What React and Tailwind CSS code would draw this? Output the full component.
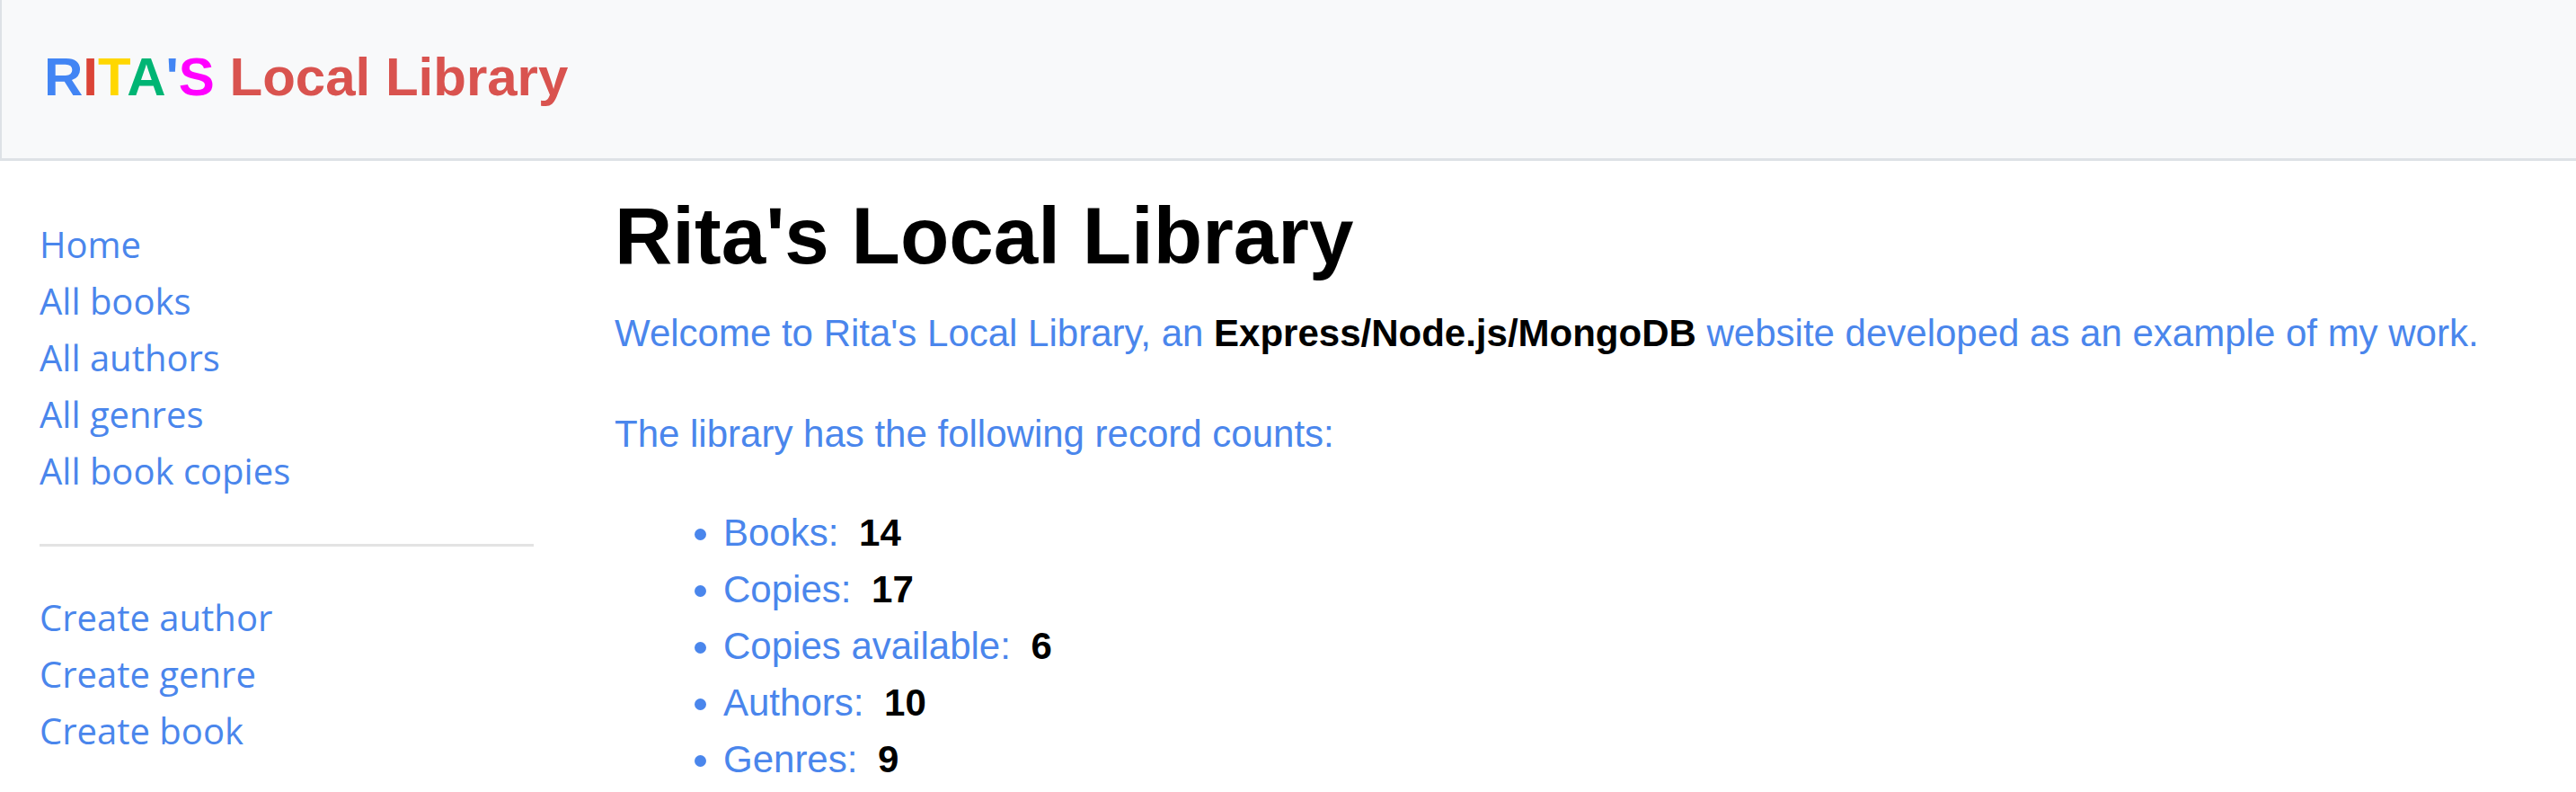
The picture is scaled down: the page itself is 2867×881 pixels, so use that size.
import React from 'react';

const navTop = ['Home', 'All books', 'All authors', 'All genres', 'All book copies'];
const navCreate = ['Create author', 'Create genre', 'Create book'];
const counts = [
    ['Books:', 14],
    ['Copies:', 17],
    ['Copies available:', 6],
    ['Authors:', 10],
    ['Genres:', 9],
];

export default function App() {
    return (
        <div className="min-h-screen bg-white font-['Liberation_Sans',Arial,sans-serif]">
            {/* Brand bar */}
            <header className="h-[179px] bg-[#f8f9fa] border-l-2 border-b-[3px] border-[#dee2e6] flex items-center pl-[47px] pb-[5px]">
                <a className="text-[60px] leading-none font-bold whitespace-pre">
                    <span className="text-[#4285f4]">R</span>
                    <span className="text-[#db4437]">I</span>
                    <span className="text-[#ffd700]">T</span>
                    <span className="text-[#00b574]">A</span>
                    <span className="text-[#4285f4]">'</span>
                    <span className="text-[#ff00ff]">S</span>
                    <span className="text-[#d9534f]"> Local Library</span>
                </a>
            </header>

            <div className="flex">
                {/* Sidebar */}
                <nav className="w-[638px] shrink-0 px-[44px] pt-[61px] font-['Open_Sans','Noto_Sans',sans-serif] text-[40px] leading-[63px] text-[#4a86ec]">
                    <ul>
                        {navTop.map((item) => (
                            <li key={item}><a>{item}</a></li>
                        ))}
                    </ul>
                    <hr className="mt-[50px] mb-[47px] border-0 h-[3px] bg-[#e3e3e3]" />
                    <ul>
                        {navCreate.map((item) => (
                            <li key={item}><a>{item}</a></li>
                        ))}
                    </ul>
                </nav>

                {/* Content */}
                <main className="flex-1 pl-[46px] pr-[44px] pt-[30px]">
                    <h1 className="text-[89px] leading-[1.2] font-bold text-black">Rita's Local Library</h1>
                    <p className="mt-[23px] text-[42px] leading-[63px] text-[#4a86ec]">
                        Welcome to Rita's Local Library, an <strong className="text-black">Express/Node.js/MongoDB</strong> website developed as an example of my work.
                    </p>
                    <p className="mt-[49px] text-[42px] leading-[63px] text-[#4a86ec]">The library has the following record counts:</p>
                    <ul className="mt-[47px] list-disc pl-[121px] text-[42px] leading-[63px] text-[#4a86ec]">
                        {counts.map(([label, n]) => (
                            <li key={label}>
                                {label} <strong className="ml-[11px] text-black">{n}</strong>
                            </li>
                        ))}
                    </ul>
                </main>
            </div>
        </div>
    );
}
